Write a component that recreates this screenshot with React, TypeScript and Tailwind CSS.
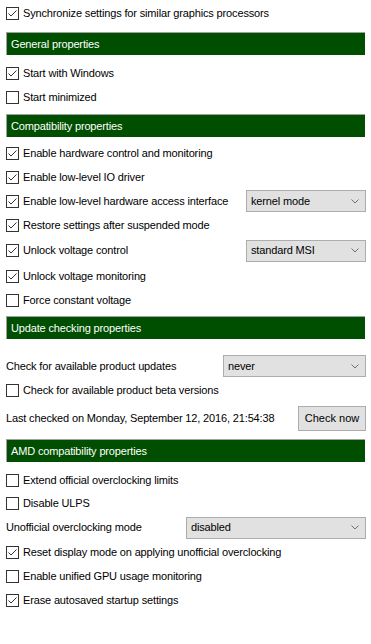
import React from "react";

const font = { fontFamily: '"Liberation Sans", Arial, sans-serif' };

function Check({ checked }: { checked: boolean }) {
  return (
    <span className="inline-flex w-[13px] h-[13px] shrink-0 border border-[#333333] bg-white items-center justify-center">
      {checked && (
        <svg width="11" height="11" viewBox="0 0 11 11">
          <path d="M1.5 5.5 L4 8 L9.5 2.5" fill="none" stroke="#333333" strokeWidth="1" />
        </svg>
      )}
    </span>
  );
}

function CheckRow({ label, checked, h = "h-[24px]", mt = "", right }: { label: string; checked: boolean; h?: string; mt?: string; right?: React.ReactNode }) {
  return (
    <div className={`flex items-center ${h} ${mt}`}>
      <Check checked={checked} />
      <span className="ml-[4px] text-[11px] tracking-[-0.15px] text-black whitespace-nowrap">{label}</span>
      {right && <div className="ml-auto flex">{right}</div>}
    </div>
  );
}

function Header({ title, mt }: { title: string; mt: string }) {
  return (
    <div className={`h-[23px] w-[359px] bg-[#004f00] border-t border-l border-[#a0a0a0] flex items-center pl-[4px] ${mt}`}>
      <span className="text-[11px] tracking-[-0.15px] text-white whitespace-nowrap">{title}</span>
    </div>
  );
}

function Select({ value, w }: { value: string; w: string }) {
  return (
    <div className={`${w} h-[22px] bg-[#e1e1e1] border border-[#adadad] flex items-center pl-[4px] pr-[6px]`}>
      <span className="text-[11px] tracking-[-0.15px] text-black">{value}</span>
      <svg className="ml-auto" width="8" height="5" viewBox="0 0 8 5">
        <path d="M0.5 0.5 L4 4 L7.5 0.5" fill="none" stroke="#707070" strokeWidth="1" />
      </svg>
    </div>
  );
}

export default function App() {
  return (
    <div className="w-[371px] h-[644px] bg-white pl-[6px] pr-[5px] flex flex-col" style={font}>
      <CheckRow label="Synchronize settings for similar graphics processors" checked h="h-[27px]" />
      <Header title="General properties" mt="mt-[5px]" />
      <CheckRow label="Start with Windows" checked mt="mt-[6px]" />
      <CheckRow label="Start minimized" checked={false} />
      <Header title="Compatibility properties" mt="mt-[5px]" />
      <CheckRow label="Enable hardware control and monitoring" checked mt="mt-[4px]" />
      <CheckRow label="Enable low-level IO driver" checked />
      <CheckRow label="Enable low-level hardware access interface" checked right={<Select value="kernel mode" w="w-[120px]" />} />
      <CheckRow label="Restore settings after suspended mode" checked />
      <CheckRow label="Unlock voltage control" checked h="h-[27px]" right={<Select value="standard MSI" w="w-[120px]" />} />
      <CheckRow label="Unlock voltage monitoring" checked />
      <CheckRow label="Force constant voltage" checked={false} />
      <Header title="Update checking properties" mt="mt-[4px]" />
      <div className="flex items-center h-[24px] mt-[15px]">
        <span className="text-[11px] tracking-[-0.15px] text-black whitespace-nowrap">Check for available product updates</span>
        <div className="ml-auto flex">
          <Select value="never" w="w-[143px]" />
        </div>
      </div>
      <CheckRow label="Check for available product beta versions" checked={false} />
      <div className="flex items-center h-[32px]">
        <span className="text-[11px] tracking-[-0.15px] text-black whitespace-nowrap">Last checked on Monday, September 12, 2016, 21:54:38</span>
        <div className="ml-auto flex">
          <div className="w-[68px] h-[25px] bg-[#e1e1e1] border border-[#adadad] flex items-center justify-center">
            <span className="text-[11px] text-black">Check now</span>
          </div>
        </div>
      </div>
      <Header title="AMD compatibility properties" mt="mt-[5px]" />
      <CheckRow label="Extend official overclocking limits" checked={false} mt="mt-[6px]" />
      <CheckRow label="Disable ULPS" checked={false} h="h-[23px]" />
      <div className="flex items-center h-[25px]">
        <span className="text-[11px] tracking-[-0.15px] text-black whitespace-nowrap">Unofficial overclocking mode</span>
        <div className="ml-auto flex">
          <Select value="disabled" w="w-[180px]" />
        </div>
      </div>
      <CheckRow label="Reset display mode on applying unofficial overclocking" checked />
      <CheckRow label="Enable unified GPU usage monitoring" checked={false} />
      <CheckRow label="Erase autosaved startup settings" checked />
    </div>
  );
}
